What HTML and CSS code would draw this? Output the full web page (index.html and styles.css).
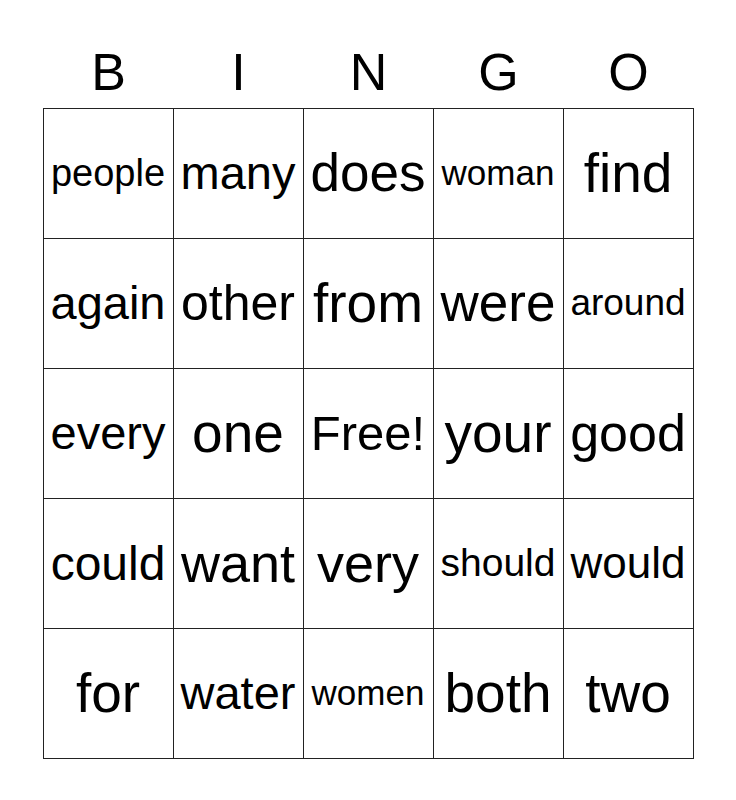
FILE: index.html
```html
<!DOCTYPE html>
<html>
<head>
<meta charset="utf-8">
<link rel="stylesheet" href="styles.css">
</head>
<body>
<div class="card">
  <div class="head">
    <div class="letter">B</div>
    <div class="letter">I</div>
    <div class="letter">N</div>
    <div class="letter">G</div>
    <div class="letter">O</div>
  </div>
  <div class="grid">
    <div class="cell s38">people</div>
    <div class="cell s47">many</div>
    <div class="cell s53">does</div>
    <div class="cell s35">woman</div>
    <div class="cell s55">find</div>

    <div class="cell s47">again</div>
    <div class="cell s50">other</div>
    <div class="cell s55">from</div>
    <div class="cell s53">were</div>
    <div class="cell s37">around</div>

    <div class="cell s47">every</div>
    <div class="cell s55">one</div>
    <div class="cell s49">Free!</div>
    <div class="cell s55">your</div>
    <div class="cell s52">good</div>

    <div class="cell s48">could</div>
    <div class="cell s54">want</div>
    <div class="cell s54">very</div>
    <div class="cell s39">should</div>
    <div class="cell s44">would</div>

    <div class="cell s55">for</div>
    <div class="cell s47">water</div>
    <div class="cell s35">women</div>
    <div class="cell s55">both</div>
    <div class="cell s55">two</div>
  </div>
</div>
</body>
</html>
```

FILE: styles.css
```css
html, body {
  margin: 0;
  padding: 0;
  background: #ffffff;
}
body {
  font-family: "Liberation Sans", Arial, sans-serif;
  color: #000000;
}
.card {
  width: 651px;
  margin: 0 auto;
  padding-top: 42px;
}
.head {
  display: grid;
  grid-template-columns: repeat(5, 130px);
  padding-left: 1px;
  height: 66px;
}
.letter {
  font-size: 52px;
  line-height: 60px;
  text-align: center;
}
.grid {
  display: grid;
  grid-template-columns: repeat(5, 130px);
  grid-auto-rows: 130px;
  border-left: 1px solid #222222;
  border-top: 1px solid #222222;
  width: 650px;
}
.cell {
  border-right: 1px solid #222222;
  border-bottom: 1px solid #222222;
  display: flex;
  align-items: center;
  justify-content: center;
  white-space: nowrap;
  line-height: 1.15;
}
.s35 { font-size: 35px; }
.s37 { font-size: 37px; }
.s38 { font-size: 38px; }
.s39 { font-size: 39px; }
.s44 { font-size: 44px; }
.s47 { font-size: 47px; }
.s48 { font-size: 48px; }
.s49 { font-size: 49px; }
.s50 { font-size: 50px; }
.s52 { font-size: 52px; }
.s53 { font-size: 53px; }
.s54 { font-size: 54px; }
.s55 { font-size: 55px; }
```
